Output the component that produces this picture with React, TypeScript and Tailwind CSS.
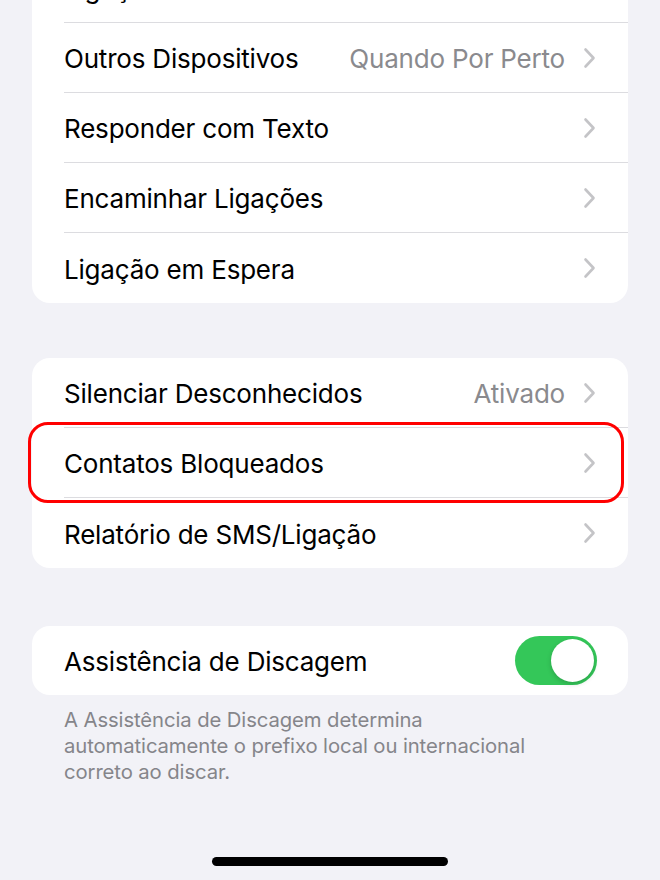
type Row = { label: string; value?: string };

function Chevron() {
  return (
    <svg width="13" height="22" viewBox="0 0 13 22" className="shrink-0">
      <path d="M2.5 2.5 L10.5 11 L2.5 19.5" fill="none" stroke="#c4c4c7" strokeWidth="2.6" strokeLinecap="round" strokeLinejoin="round" />
    </svg>
  );
}

function SettingsRow({ label, value, last }: Row & { last?: boolean }) {
  return (
    <div className="pl-8 h-[70px]">
      <div className={`h-full flex items-center pr-[32px] ${last ? "" : "border-b border-[#dcdce0]"}`}>
        <span className="flex-1 text-[26px] text-black tracking-[-0.2px] pt-[2px]">{label}</span>
        {value && <span className="text-[26px] text-[#8a8a8e] tracking-[-0.2px] mr-[18px] pt-[2px]">{value}</span>}
        <Chevron />
      </div>
    </div>
  );
}

const group1: Row[] = [
  { label: "Ligações Wi-Fi" },
  { label: "Outros Dispositivos", value: "Quando Por Perto" },
  { label: "Responder com Texto" },
  { label: "Encaminhar Ligações" },
  { label: "Ligação em Espera" },
];

const group2: Row[] = [
  { label: "Silenciar Desconhecidos", value: "Ativado" },
  { label: "Contatos Bloqueados" },
  { label: "Relatório de SMS/Ligação" },
];

export default function App() {
  return (
    <div
      className="w-[660px] h-[880px] bg-[#f2f2f7] overflow-hidden relative"
      style={{ fontFamily: "Inter, 'Noto Sans', sans-serif" }}
    >
      <div className="mx-8 mt-[-47px] bg-white rounded-[18px]">
        {group1.map((r, i) => (
          <SettingsRow key={r.label} {...r} last={i === group1.length - 1} />
        ))}
      </div>

      <div className="mx-8 mt-[55px] bg-white rounded-[18px] relative">
        {group2.map((r, i) => (
          <SettingsRow key={r.label} {...r} last={i === group2.length - 1} />
        ))}
        <div className="absolute left-[-4px] right-[4px] top-[64px] h-[81px] border-[3px] border-[#ff0000] rounded-[20px] pointer-events-none" />
      </div>

      <div className="mx-8 mt-[58px] bg-white rounded-[18px] h-[69px] pl-8 pr-[31px] flex items-center">
        <span className="flex-1 text-[26px] text-black tracking-[-0.2px] pt-[2px]">Assistência de Discagem</span>
        <div className="w-[82px] h-[49px] rounded-full bg-[#34c759] relative">
          <div className="absolute right-[3px] top-[3px] w-[43px] h-[43px] rounded-full bg-white shadow-[0_2px_5px_rgba(0,0,0,0.18)]" />
        </div>
      </div>

      <p className="mx-8 pl-8 pr-2 mt-[12px] text-[20.3px] leading-[26px] text-[#85858a] tracking-[-0.1px]">
        A Assistência de Discagem determina
        <br />
        automaticamente o prefixo local ou internacional
        <br />
        correto ao discar.
      </p>

      <div className="absolute left-[212px] top-[857px] w-[236px] h-[9px] rounded-full bg-black" />
    </div>
  );
}
